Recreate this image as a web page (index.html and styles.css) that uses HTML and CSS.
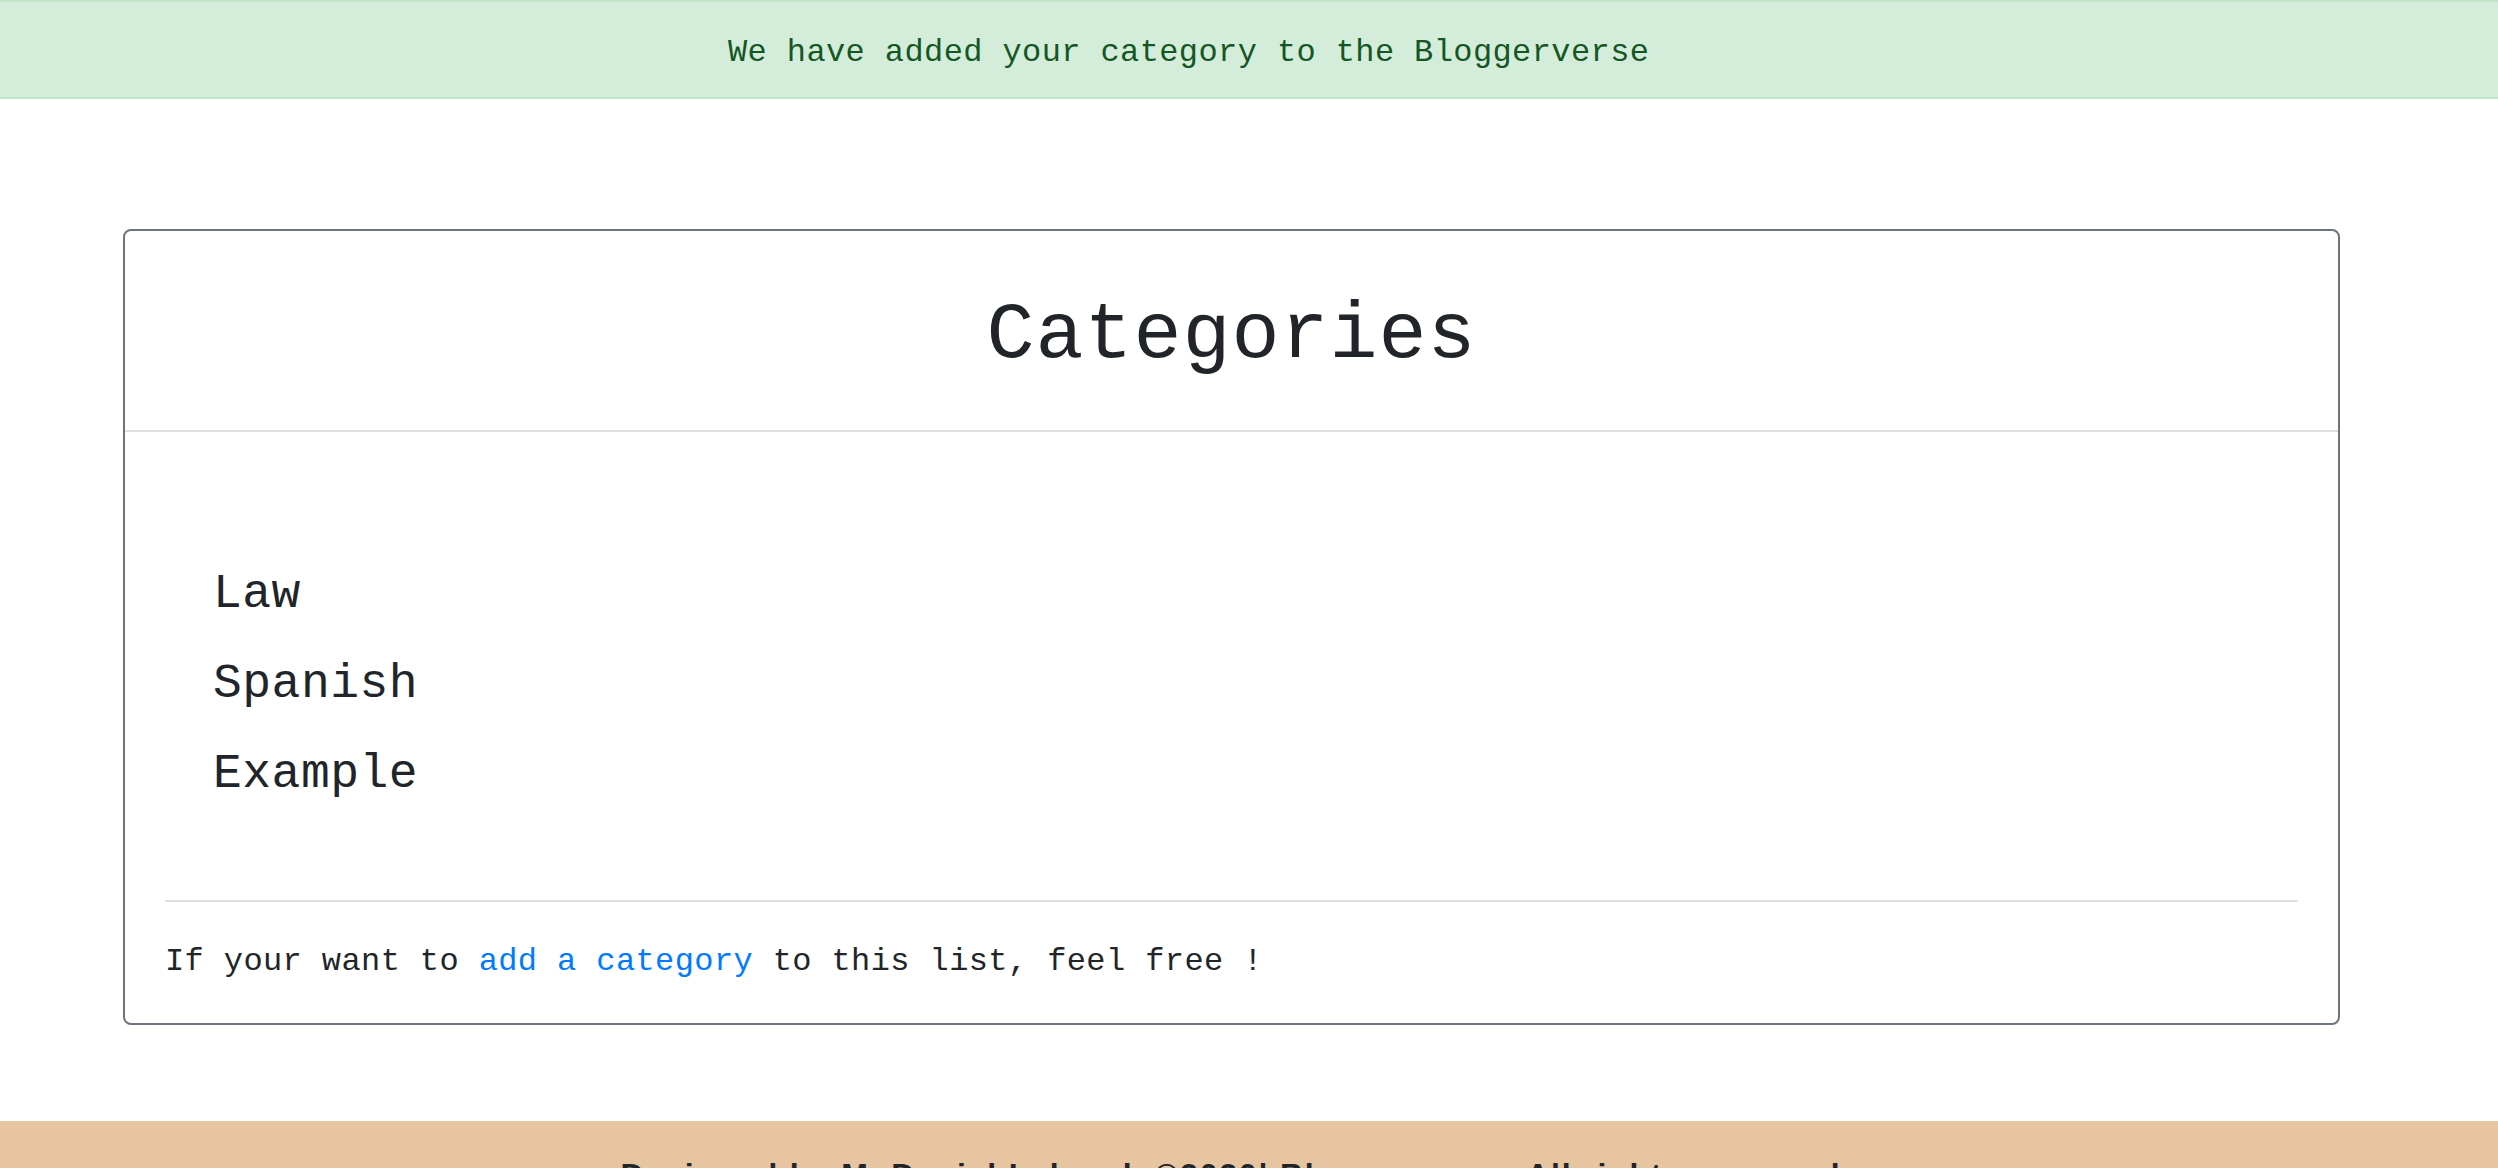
FILE: index.html
```html
<!DOCTYPE html>
<html lang="en">
<head>
<meta charset="utf-8">
<title>Categories</title>
<link rel="stylesheet" href="styles.css">
</head>
<body>
<div class="alert">
  <span class="alert-text">We have added your category to the Bloggerverse</span>
</div>
<main class="main">
  <section class="card">
    <header class="card-header">
      <h1 class="card-title">Categories</h1>
    </header>
    <div class="card-body">
      <ul class="cat-list">
        <li class="cat-item">Law</li>
        <li class="cat-item">Spanish</li>
        <li class="cat-item">Example</li>
      </ul>
      <hr class="divider">
      <p class="card-note">If your want to <a class="link" href="#">add a category</a> to this list, feel free !</p>
    </div>
  </section>
</main>
<footer class="footer">
  <p class="footer-text">Designed by M. Daniel Lelouch ©2020| Bloggerverse. All rights reserved</p>
</footer>
</body>
</html>
```

FILE: styles.css
```css
html, body {
  margin: 0;
  padding: 0;
  background: #ffffff;
}

body {
  font-family: "Liberation Mono", "DejaVu Sans Mono", monospace;
  color: #212529;
  font-size: 32px;
  line-height: 48px;
}

.alert {
  background: #d4edda;
  border-top: 2px solid #c3e6cb;
  border-bottom: 2px solid #c3e6cb;
  color: #155724;
  padding: 27px 0 20px 728px;
  height: 48px;
}

.alert-text {
  font-size: 32px;
  letter-spacing: 0.4px;
  white-space: nowrap;
}

.main {
  padding: 130px 158px 96px 123px;
}

.card {
  border: 2px solid #6c757d;
  border-radius: 8px;
  background: #ffffff;
}

.card-header {
  padding: 57px 0 46px;
  border-bottom: 2px solid #dfdfdf;
  text-align: center;
}

.card-title {
  margin: 0;
  font-size: 80px;
  line-height: 96px;
  font-weight: 400;
  letter-spacing: 1px;
}

.card-body {
  padding: 117px 40px 37px;
}

.cat-list {
  list-style: none;
  margin: 0;
  padding: 0 0 0 48px;
  display: flex;
  flex-direction: column;
}

.cat-item {
  font-size: 48px;
  line-height: 90px;
  letter-spacing: 0.5px;
}

.divider {
  margin: 81px 0 36px;
  border: 0;
  border-top: 2px solid #e0e0e0;
  height: 0;
}

.card-note {
  margin: 0;
  font-size: 32px;
  line-height: 48px;
  letter-spacing: 0.4px;
  white-space: nowrap;
}

.link {
  color: #007bff;
  text-decoration: none;
}

.footer {
  background: #e7c5a0;
  padding: 30px 36px 30px 0;
  text-align: center;
}

.footer-text {
  margin: 0;
  font-family: "Liberation Sans", Arial, sans-serif;
  font-size: 32px;
  line-height: 48px;
  font-weight: 700;
  letter-spacing: 1.8px;
  color: #212529;
}
```
